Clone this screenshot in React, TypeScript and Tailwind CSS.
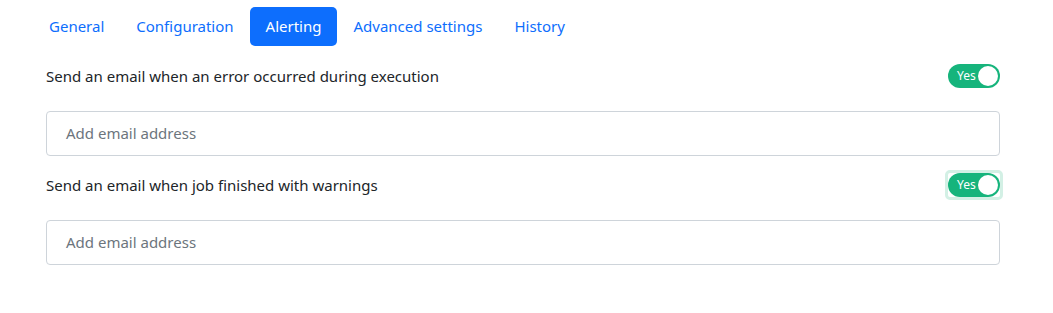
import React from "react";

function Toggle({ focused }: { focused?: boolean }) {
  return (
    <div className={focused ? "rounded-[2px] outline-[3px] outline-solid outline-[#d3f0e5]" : ""}>
      <div className="relative flex h-[24px] w-[52px] items-center rounded-full bg-[#16b47c]">
        <span className="pl-[9px] text-[12px] leading-none text-white">Yes</span>
        <span className="absolute right-[2px] top-[2px] h-[20px] w-[20px] rounded-full bg-white" />
      </div>
    </div>
  );
}

export default function App() {
  const tabs = ["General", "Configuration", "Alerting", "Advanced settings", "History"];
  return (
    <div
      className="min-h-[313px] w-[1053px] bg-white pl-[46px] pr-[53px] pt-[7px] text-[15px] text-[#212529]"
      style={{ fontFamily: '"Noto Sans", "Liberation Sans", sans-serif' }}
    >
      <nav className="-ml-[13px] flex">
        {tabs.map((t) =>
          t === "Alerting" ? (
            <div key={t} className="rounded-[5px] bg-[#0d6efd] px-[16px] py-[8px] leading-[23px] text-white">
              {t}
            </div>
          ) : (
            <div key={t} className="px-[16px] py-[8px] leading-[23px] text-[#0d6efd]">
              {t}
            </div>
          )
        )}
      </nav>
      <div className="mt-[18px] flex items-center justify-between">
        <span className="leading-[24px]">Send an email when an error occurred during execution</span>
        <Toggle />
      </div>
      <div className="mt-[23px] flex h-[45px] items-center rounded-[4px] border border-[#ced4da] pl-[19px] text-[#6c757d]">
        Add email address
      </div>
      <div className="mt-[17px] flex items-center justify-between">
        <span className="leading-[24px]">Send an email when job finished with warnings</span>
        <Toggle focused />
      </div>
      <div className="mt-[23px] flex h-[45px] items-center rounded-[4px] border border-[#ced4da] pl-[19px] text-[#6c757d]">
        Add email address
      </div>
    </div>
  );
}
